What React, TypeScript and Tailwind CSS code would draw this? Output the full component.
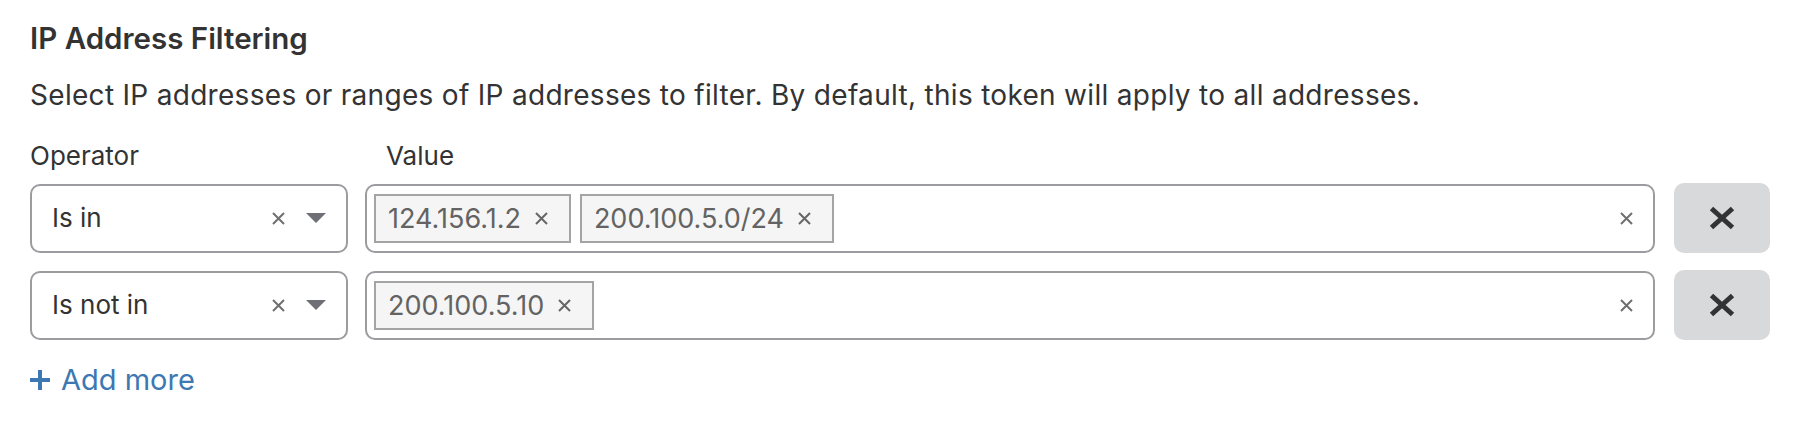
import React from "react";

function SmallX({ size = 13, color = "#6f6f6f", stroke = 2 }: { size?: number; color?: string; stroke?: number }) {
  return (
    <svg width={size} height={size} viewBox="0 0 13 13" className="shrink-0">
      <path d="M1 1 L12 12 M12 1 L1 12" stroke={color} strokeWidth={stroke} fill="none" />
    </svg>
  );
}

function Caret() {
  return (
    <svg width="20" height="10" viewBox="0 0 20 10" className="shrink-0">
      <path d="M0 0 L20 0 L10 10 Z" fill="#6e7075" />
    </svg>
  );
}

function Chip({ label }: { label: string }) {
  return (
    <div className="h-[49px] border-2 border-[#a3a4a6] bg-[#f5f5f5] flex items-center pl-[12px] pr-[21px] text-[27px] leading-none text-[#636363]">
      <span>{label}</span>
      <span className="ml-[14px] flex items-center">
        <SmallX size={13} color="#666666" stroke={2} />
      </span>
    </div>
  );
}

function OperatorSelect({ value }: { value: string }) {
  return (
    <div className="w-[318px] h-[69px] shrink-0 border-2 border-[#9b9c9f] rounded-[10px] flex items-center pl-[20px] pr-[20px] bg-white">
      <span className="flex-1 text-[26px] leading-none text-[#333333]">{value}</span>
      <SmallX />
      <span className="ml-[21px] flex items-center">
        <Caret />
      </span>
    </div>
  );
}

function ValueBox({ chips }: { chips: string[] }) {
  return (
    <div className="flex-1 h-[69px] border-2 border-[#9b9c9f] rounded-[10px] flex items-center pl-[7px] pr-[20px] bg-white">
      <div className="flex items-center gap-[9px]">
        {chips.map((c) => (
          <Chip key={c} label={c} />
        ))}
      </div>
      <span className="ml-auto flex items-center">
        <SmallX />
      </span>
    </div>
  );
}

function DeleteButton() {
  return (
    <button className="ml-[2px] w-[96px] h-[70px] shrink-0 rounded-[10px] bg-[#d8d9db] flex items-center justify-center">
      <svg width="26" height="24" viewBox="0 0 26 24">
        <path d="M2.5 2.5 L23.5 21.5 M23.5 2.5 L2.5 21.5" stroke="#333333" strokeWidth="5" fill="none" />
      </svg>
    </button>
  );
}

function Row({ op, chips }: { op: string; chips: string[] }) {
  return (
    <div className="flex items-center gap-[17px]">
      <OperatorSelect value={op} />
      <ValueBox chips={chips} />
      <DeleteButton />
    </div>
  );
}

export default function App() {
  return (
    <div className="w-[1802px] h-[442px] bg-white pl-[30px] pr-[32px] pt-[20px] text-[#333333] font-[Inter,sans-serif]">
      <h2 className="text-[29.5px] leading-[36px] font-semibold">IP Address Filtering</h2>
      <p className="mt-[23px] text-[28px] leading-[32px] tracking-[0.3px]">
        Select IP addresses or ranges of IP addresses to filter. By default, this token will apply to all addresses.
      </p>
      <div className="mt-[29px] flex text-[26px] leading-[32px]">
        <div className="w-[318px]">Operator</div>
        <div className="ml-[17px] pl-[21px]">Value</div>
      </div>
      <div className="mt-[11px] flex flex-col gap-[17px]">
        <Row op="Is in" chips={["124.156.1.2", "200.100.5.0/24"]} />
        <Row op="Is not in" chips={["200.100.5.10"]} />
      </div>
      <div className="mt-[23px] flex items-center text-[#3d78b2] text-[29px] leading-[34px]">
        <svg width="20" height="20" viewBox="0 0 20 20" className="shrink-0">
          <path d="M10 0 L10 20 M0 10 L20 10" stroke="#3d78b2" strokeWidth="4" fill="none" />
        </svg>
        <span className="ml-[11px]">Add more</span>
      </div>
    </div>
  );
}
